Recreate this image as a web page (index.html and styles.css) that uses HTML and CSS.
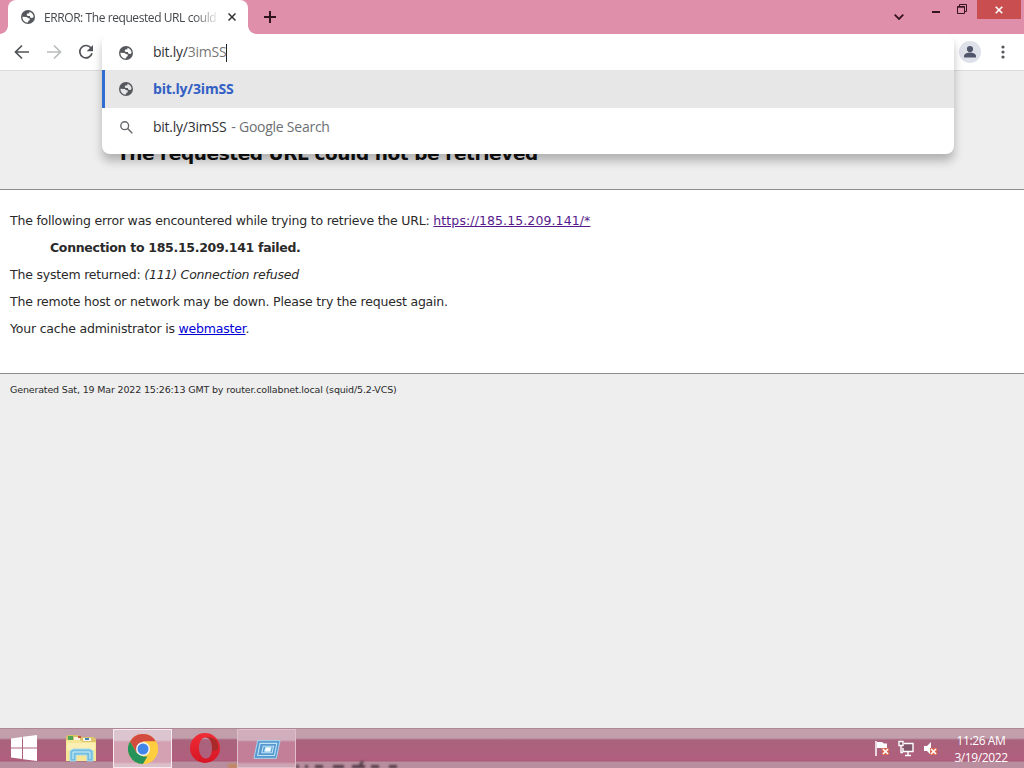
FILE: index.html
```html
<!DOCTYPE html>
<html lang="en">
<head>
<meta charset="utf-8">
<title>ERROR: The requested URL could not be retrieved</title>
<link rel="stylesheet" href="styles.css">
</head>
<body>
<svg width="0" height="0" class="defs">
  <symbol id="globe" viewBox="0 0 20 20"><path fill-rule="evenodd" d="M10 0a10 10 0 1 0 0 20a10 10 0 1 0 0-20zM12 2.500C15.500 3.400 18 6.400 18 10l-2 1.500-2.500-.5-1-2.500H9.500L8 7l1-2 3-.5zM2 9.500l6 .5 2 1.500 2.500.5v2.500l-2 1-.5 2.500C5.500 18 2 14.500 2 9.500z"/></symbol>
</svg>
<div class="screen">
  <header class="tabstrip">
    <div class="tab">
      <svg class="globe"><use href="#globe"/></svg>
      <span class="tab-title">ERROR: The requested URL could</span>
      <svg class="tab-close" viewBox="0 0 8 8"><path d="M.5.5l7 7M7.5.5l-7 7"/></svg>
    </div>
    <svg class="new-tab" viewBox="0 0 12 12"><path d="M6 0v12M0 6h12"/></svg>
    <div class="window-controls">
      <svg class="chevron" viewBox="0 0 10 6"><path d="M.7.7L5 5 9.3.7"/></svg>
      <svg class="minimize" viewBox="0 0 8 2"><path d="M0 1h8"/></svg>
      <svg class="restore" viewBox="0 0 10 10"><path d="M.5 2.5h7v7h-7zM.5 3.2h7M2.5 2V.5h7v7H8"/></svg>
      <div class="close"><svg viewBox="0 0 8 8"><path d="M.7.7l6.6 6.6M7.3.7L.7 7.3"/></svg></div>
    </div>
  </header>
  <nav class="toolbar">
    <svg class="nav" viewBox="0 0 16 16"><path d="M15 8H2M8 1.5L1.5 8 8 14.5"/></svg>
    <svg class="nav dim" viewBox="0 0 16 16"><path d="M1 8h13M8 1.5L14.500 8 8 14.500"/></svg>
    <svg class="nav" viewBox="0 0 16 16"><path d="M13.200 4.300A6.200 6.200 0 1 0 14 9.300"/><path class="solid" d="M15 1v6.300H8.700z"/></svg>
    <div class="toolbar-end">
      <svg class="avatar" viewBox="0 0 22 22"><circle cx="11" cy="11" r="11" fill="#dfe1ea"/><circle cx="11" cy="8" r="3.100" fill="#50576a"/><path d="M5 16.500V15c0-2.300 4-3.400 6-3.400s6 1.100 6 3.400v1.500z" fill="#50576a"/></svg>
      <svg class="kebab" viewBox="0 0 4 14"><circle cx="2" cy="2" r="1.600"/><circle cx="2" cy="7" r="1.600"/><circle cx="2" cy="12" r="1.600"/></svg>
    </div>
  </nav>
  <main class="page">
    <div class="titles"><h2>The requested URL could not be retrieved</h2></div>
    <section class="content">
      <p class="intro">The following error was encountered while trying to retrieve the URL: <a class="visited">https://185.15.209.141/*</a></p>
      <blockquote>Connection to 185.15.209.141 failed.</blockquote>
      <p>The system returned: <i>(111) Connection refused</i></p>
      <p>The remote host or network may be down. Please try the request again.</p>
      <p>Your cache administrator is <a>webmaster</a>.</p>
    </section>
    <footer>Generated Sat, 19 Mar 2022 15:26:13 GMT by router.collabnet.local (squid/5.2-VCS)</footer>
  </main>
  <div class="taskbar">
    <svg class="start" viewBox="0 0 26 26"><path d="M0 3.500L11 2v10.500H0zM12 1.800L26 0v12.500H12zM0 13.500h11V24L0 22.500zM12 13.500h14V26l-14-1.800z" fill="#fff"/></svg>
    <svg class="explorer" viewBox="0 0 32 28">
      <path d="M1 3l2-2h10l2 2h14l2 2v22H1z" fill="#dcc36b"/>
      <path d="M3 2h5v4H3z" fill="#4fa658"/><path d="M9 3h6v3H9z" fill="#faf4dc"/><path d="M13 2h3v2h-3z" fill="#c65737"/><path d="M18 4h8v3h-8z" fill="#f9f7ec"/><path d="M20 4h4v2h-4z" fill="#4386b5"/>
      <path d="M1 6h14l3 2h13v19H1z" fill="#f7e696"/><path d="M2 9h28v7H2z" fill="#fbefb3"/>
      <path d="M5 27V17l3-2h17l3 2v10h-6v-6H11v6z" fill="#72bde0" stroke="#a9def1"/>
      <path d="M8 25v-7h17v7" fill="none" stroke="#d5f3fa"/>
    </svg>
    <div class="task chrome"><svg viewBox="0 0 30 30">
      <circle cx="15" cy="15" r="15" fill="#ffcd40"/>
      <path d="M2 7.500A15 15 0 0 1 28 7.500H15L8.500 18.700z" fill="#d34a3f"/>
      <path d="M2 7.500L8.500 18.700 15 22.500h6.500L15 30A15 15 0 0 1 2 7.500z" fill="#26935a"/>
      <path d="M21.500 18.700L15 30A15 15 0 0 0 28 7.500H15z" fill="#ffcd40"/>
      <circle cx="15" cy="15" r="7" fill="#f3f3f3"/><circle cx="15" cy="15" r="5.500" fill="#4285e8"/>
    </svg></div>
    <svg class="opera" viewBox="0 0 30 30"><defs><linearGradient id="o" x2="0" y2="1"><stop stop-color="#f02c35"/><stop offset="1" stop-color="#d71524"/></linearGradient></defs><path fill="url(#o)" fill-rule="evenodd" d="M15 0a15 15 0 1 0 0 30a15 15 0 1 0 0-30M15.500 4.500c4.500 0 6.500 4.500 6.500 10.500S20 25.500 16 25.500 9 21 9 15 11.500 4.500 15.500 4.500"/><path d="M15.500 4.500c4-1 9 .5 11 3 2 4 2 6 1.500 9l-6 2c.5-8-1-14-6.500-14" fill="#a92a28"/></svg>
    <div class="task window"><svg viewBox="0 0 30 22"><path d="M5 2h24l-4 19H1z" fill="#5798cf" stroke="#a9daf0"/><path d="M7.500 5h18l-2.500 13H5zM11 8h11l-1.500 7h-11z" fill="none" stroke="#bfe4f6" stroke-width="1.200"/><path d="M13.500 9.500h6l-1 4h-6z" fill="#fff" stroke="#cceefa"/></svg></div>
    <div class="tray">
      <svg class="flag" viewBox="0 0 17 17"><path d="M2 1v15" stroke="#fff" stroke-width="1.500"/><path d="M3 2h5l2 1.500h3V9H9L7 8H3z" fill="#fff"/><path d="M8 8h7v7H8z" fill="#dc654d"/><path d="M9 9l5 5M14 9l-5 5" stroke="#fff" stroke-width="1.600"/></svg>
      <svg class="network" viewBox="0 0 17 17"><path d="M6 3.500h9v8H5V8M10 12v3M7 15.500h6M1 1.500h4v4H1zM3 5.500v7h2" fill="#81556a" stroke="#fff" stroke-width="1.400"/></svg>
      <svg class="sound" viewBox="0 0 17 17"><path d="M2 6h3l4-4v13l-4-4H2z" fill="#fff"/><path d="M8 8h7v7H8z" fill="#dc654d"/><path d="M9 9l5 5M14 9l-5 5" stroke="#fff" stroke-width="1.600"/></svg>
      <div class="clock"><span class="time">11:26 AM</span><span class="date">3/19/2022</span></div>
    </div>
    <svg class="reflection" viewBox="0 0 180 8"><path d="M0 4h10v4H0z" fill="#c68650"/><path d="M38 3h2v5h-2zM54 5h9v3h-9zM68 5h3v3h-3zM77 5h3v3h-3zM87 5h8v3h-8zM105 5h11v3h-11zM124 5h7l2-4h3l-2 4h3v3h-13zM143 5h8v3h-8zM161 5h8v3h-8z" fill="#392630"/></svg>
  </div>
  <div class="omnibox">
    <div class="row query"><svg class="globe"><use href="#globe"/></svg><span>bit.ly/<em>3imSS</em></span><b class="caret"></b></div>
    <div class="row selected"><svg class="globe"><use href="#globe"/></svg><strong>bit.ly/3imSS</strong></div>
    <div class="row search"><svg class="magnifier" viewBox="0 0 13 13"><circle cx="4.700" cy="4.700" r="3.900"/><path d="M7.600 7.600l4.700 4.700"/></svg><span>bit.ly/3imSS</span><span class="hint">- Google Search</span></div>
  </div>
</div>
</body>
</html>
```
FILE: styles.css
```css
* { box-sizing: border-box; }
body { margin: 0; overflow: hidden; }
svg { display: block; flex: none; }
.defs { position: absolute; }
.screen { position: relative; width: 1024px; height: 768px; display: flex; flex-direction: column; font-family: "Open Sans", "Noto Sans", sans-serif; }

.tabstrip { height: 34px; flex: none; background: #e08fab; display: flex; padding-left: 8px; }
.tab { position: relative; width: 240px; height: 34px; background: #fff; border-radius: 8px 8px 0 0; display: flex; align-items: center; padding-left: 13px; }
.tab::before, .tab::after { content: ""; position: absolute; bottom: 0; width: 8px; height: 8px; }
.tab::before { left: -8px; background: radial-gradient(circle at 0 0, transparent 7.500px, #fff 8px); }
.tab::after { right: -8px; background: radial-gradient(circle at 100% 0, transparent 7.500px, #fff 8px); }
.globe { width: 14px; height: 14px; fill: #55585c; }
.tab-title { width: 173px; margin-left: 9px; white-space: nowrap; font-size: 12px; letter-spacing: -.42px; color: #45484c; -webkit-mask-image: linear-gradient(90deg, #000 150px, transparent 176px); }
.tab-close { width: 8px; height: 8px; margin-left: 11px; fill: none; stroke: #303236; stroke-width: 1.500; }
.new-tab { width: 12px; height: 12px; margin: 11px 0 0 16px; stroke: #30151f; stroke-width: 2; }
.window-controls { margin-left: auto; display: flex; fill: none; stroke: #35131f; }
.chevron { width: 10px; height: 6px; margin: 14px 28px 0 0; stroke-width: 1.800; }
.minimize { width: 8px; height: 2px; margin: 11px 17px 0 0; stroke-width: 2; }
.restore { width: 10px; height: 10px; margin: 4px 10px 0 0; }
.close { width: 44px; height: 19px; margin-right: 3px; background: #c84e50; display: grid; place-items: center; }
.close svg { width: 8px; height: 8px; stroke: #fff; stroke-width: 1.600; }

.toolbar { height: 37px; flex: none; background: #fff; border-bottom: 1px solid #dcdcdc; display: flex; align-items: center; padding: 0 19px 0 14px; gap: 16px; }
.nav { width: 16px; height: 16px; fill: none; stroke: #505357; stroke-width: 1.700; }
.nav .solid { fill: #505357; stroke: none; }
.dim { stroke: #b9bbbd; }
.toolbar-end { margin-left: auto; display: flex; align-items: center; gap: 20px; }
.avatar { width: 22px; height: 22px; }
.kebab { width: 4px; height: 14px; fill: #54575b; }

.page { flex: 1; background: #eee; font: 12.500px "DejaVu Sans", sans-serif; color: #2a2a2a; letter-spacing: -.2px; }
.titles { height: 118px; padding: 72px 0 0 117px; }
h2 { margin: 0; font-size: 18.500px; line-height: 22px; color: #111; white-space: nowrap; letter-spacing: -.42px; }
.content { height: 185px; padding: 23px 10px 0; background: #fff; border: solid #8c8c90; border-width: 1px 0; display: flex; flex-direction: column; gap: 11px; }
.content p, blockquote { margin: 0; line-height: 16px; white-space: nowrap; }
blockquote { padding-left: 40px; font-weight: bold; letter-spacing: -.3px; }
a { color: #0000d8; text-decoration: underline; }
.visited { color: #551a8b; letter-spacing: .1px; }
i { letter-spacing: -.2px; }
footer { padding: 10px; font-size: 9.500px; line-height: 12px; white-space: nowrap; letter-spacing: -.16px; }

.taskbar { position: relative; height: 40px; flex: none; display: flex; align-items: center; background: linear-gradient(#ad8796 0 1px, #c19fab 1px 10px, #a9637c 12px, #b05f7d 32px, #a85b74 33px, #b98e9f 34px 100%); overflow: hidden; }
.start { width: 26px; height: 26px; margin-left: 11px; }
.explorer { width: 32px; height: 28px; margin-left: 28px; }
.task { width: 59px; height: 39px; align-self: flex-end; display: grid; place-items: center; border: 1px solid #d0a5b4; z-index: 1; }
.chrome { margin-left: 16px; background: linear-gradient(#dcc5ce 0 10px, #d4a1b2 12px 32px, #dbbfc9 34px); border-color: #f7eaf0; }
.chrome svg { width: 30px; height: 30px; }
.opera { width: 30px; height: 30px; margin-left: 18px; }
.window { margin-left: 17px; background: linear-gradient(#d0aebb 0 10px, #c37f98 12px 32px, #cda5b2 34px); border-color: #dfbfca; }
.window svg { width: 28px; height: 22px; }
.tray { margin-left: auto; display: flex; align-items: center; padding-right: 15px; }
.tray svg { width: 17px; height: 17px; margin-right: 7px; }
.clock { width: 56px; margin-left: 7px; padding-top: 1px; display: flex; flex-direction: column; align-items: center; color: #fff; font-size: 12px; line-height: 17px; white-space: nowrap; letter-spacing: -.4px; }
.time { letter-spacing: -.4px; }
.reflection { position: absolute; left: 228px; bottom: 0; width: 180px; height: 8px; filter: blur(1px); opacity: .8; }

.omnibox { position: absolute; left: 102px; top: 35px; width: 852px; height: 119px; background: #fff; border-radius: 8px; box-shadow: 0 7px 10px rgba(0,0,0,.25); clip-path: inset(0 -20px -30px -20px); font-size: 14px; color: #303236; }
.row { display: flex; align-items: center; padding-left: 17px; white-space: nowrap; letter-spacing: -.25px; }
.row .globe { width: 14px; height: 14px; margin: 0 21px 0 0; }
.row > :nth-child(2) { margin-left: -1px; }
.row > span, .row > strong { transform: translateY(-1px); }
.query { height: 35px; }
.query em { font-style: normal; color: #777; }
.caret { width: 1px; height: 18px; background: #222; }
.selected { height: 38px; background: #e7e7e7; border-left: 3px solid #2f6bd0; padding-left: 14px; }
.selected strong { color: #3260c4; letter-spacing: -.18px; }
.search { height: 38px; }
.magnifier { width: 13px; height: 13px; margin: 0 21px 0 1px; fill: none; stroke: #63666a; stroke-width: 1.400; }
.hint { margin-left: 5px; color: #6c6f73; }
```
